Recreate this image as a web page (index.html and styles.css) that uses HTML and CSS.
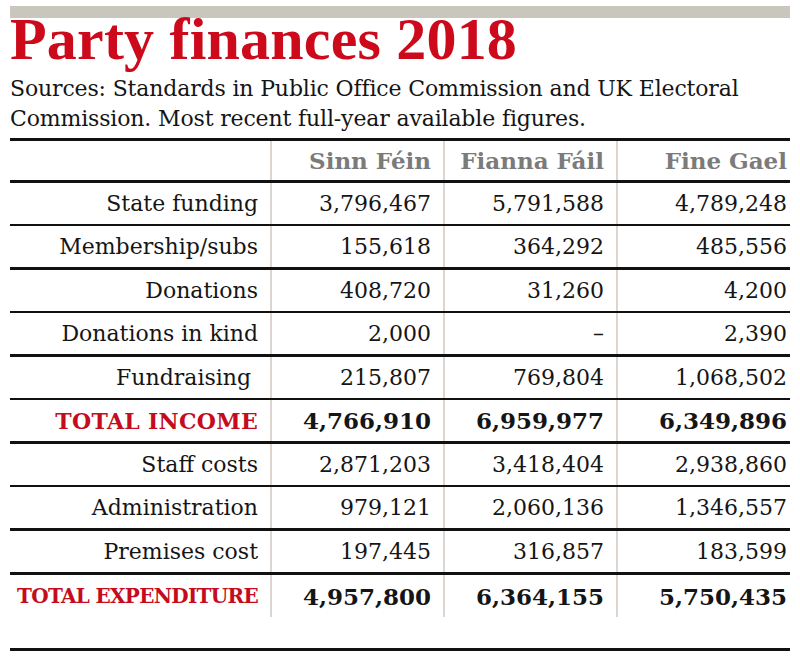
FILE: index.html
```html
<!DOCTYPE html>
<html lang="en">
<head>
<meta charset="utf-8">
<title>Party finances 2018</title>
<link rel="stylesheet" href="styles.css">
</head>
<body>
<div class="page">
  <div class="topbar"></div>
  <h1 class="title">Party finances 2018</h1>
  <p class="source">Sources: Standards in Public Office Commission and UK Electoral Commission. Most recent full-year available figures.</p>
  <table class="fin">
    <colgroup>
      <col class="c-label"><col class="c-num"><col class="c-num"><col class="c-last">
    </colgroup>
    <thead>
      <tr class="thick">
        <th class="label"></th>
        <th>Sinn Féin</th>
        <th>Fianna Fáil</th>
        <th class="last">Fine Gael</th>
      </tr>
    </thead>
    <tbody>
      <tr class="thin"><td class="label">State funding</td><td>3,796,467</td><td>5,791,588</td><td class="last">4,789,248</td></tr>
      <tr class="thick"><td class="label">Membership/subs</td><td>155,618</td><td>364,292</td><td class="last">485,556</td></tr>
      <tr class="thin"><td class="label">Donations</td><td>408,720</td><td>31,260</td><td class="last">4,200</td></tr>
      <tr class="thick"><td class="label">Donations in kind</td><td>2,000</td><td>–</td><td class="last">2,390</td></tr>
      <tr class="thin"><td class="label">Fundraising&nbsp;</td><td>215,807</td><td>769,804</td><td class="last">1,068,502</td></tr>
      <tr class="thick total"><td class="label">TOTAL INCOME</td><td>4,766,910</td><td>6,959,977</td><td class="last">6,349,896</td></tr>
      <tr class="thin"><td class="label">Staff costs</td><td>2,871,203</td><td>3,418,404</td><td class="last">2,938,860</td></tr>
      <tr class="thick"><td class="label">Administration</td><td>979,121</td><td>2,060,136</td><td class="last">1,346,557</td></tr>
      <tr class="thick"><td class="label">Premises cost</td><td>197,445</td><td>316,857</td><td class="last">183,599</td></tr>
      <tr class="none total"><td class="label small">TOTAL EXPENDITURE</td><td>4,957,800</td><td>6,364,155</td><td class="last">5,750,435</td></tr>
    </tbody>
  </table>
  <div class="bottom-rule"></div>
</div>
</body>
</html>
```

FILE: styles.css
```css
html, body {
  margin: 0;
  padding: 0;
  background: #ffffff;
}

.page {
  width: 780px;
  padding: 0 10px;
  font-family: "DejaVu Serif", "Liberation Serif", serif;
  color: #151515;
}

.topbar {
  margin-top: 6px;
  height: 12px;
  background: #c9c6bd;
}

.title {
  margin: 0;
  font-family: "Liberation Serif", "Times New Roman", serif;
  font-weight: bold;
  font-size: 60px;
  line-height: 43px;
  color: #cc0a1c;
  letter-spacing: 0.2px;
}

.source {
  margin: 13px 0 0;
  font-size: 22px;
  line-height: 30px;
  letter-spacing: -0.15px;
}

.fin {
  width: 780px;
  margin-top: 4px;
  border-collapse: separate;
  border-spacing: 0;
  table-layout: fixed;
  font-size: 22px;
}

.c-label { width: 260px; }
.c-num { width: 173px; }
.c-last { width: 174px; }

.fin th, .fin td {
  height: 41px;
  padding: 0 12px 0 0;
  text-align: right;
  vertical-align: middle;
  white-space: nowrap;
  background: linear-gradient(#ddd6d0, #ddd6d0) left top / 2px 100% no-repeat;
}

.fin th.label, .fin td.label {
  background: none;
}

.fin th.last, .fin td.last {
  padding-right: 3px;
}

.fin thead th {
  border-top: 3px solid #111;
  height: 39px;
  font-size: 23px;
  font-weight: bold;
  color: #7b7b7b;
  letter-spacing: 0;
}

.fin tr.thick > * { border-bottom: 3px solid #111; }
.fin tr.thin > * { border-bottom: 2px solid #111; }
.fin tr.none > * { height: 42px; }

.fin tr.total td {
  font-weight: bold;
  font-size: 23px;
}

.fin tr.total td.label {
  font-size: 22px;
  color: #c40c1e;
  letter-spacing: 0.3px;
}

.fin tr.total td.label.small {
  font-size: 20px;
  letter-spacing: -0.7px;
}

.bottom-rule {
  margin-top: 31px;
  height: 3px;
  background: #111;
}
```
